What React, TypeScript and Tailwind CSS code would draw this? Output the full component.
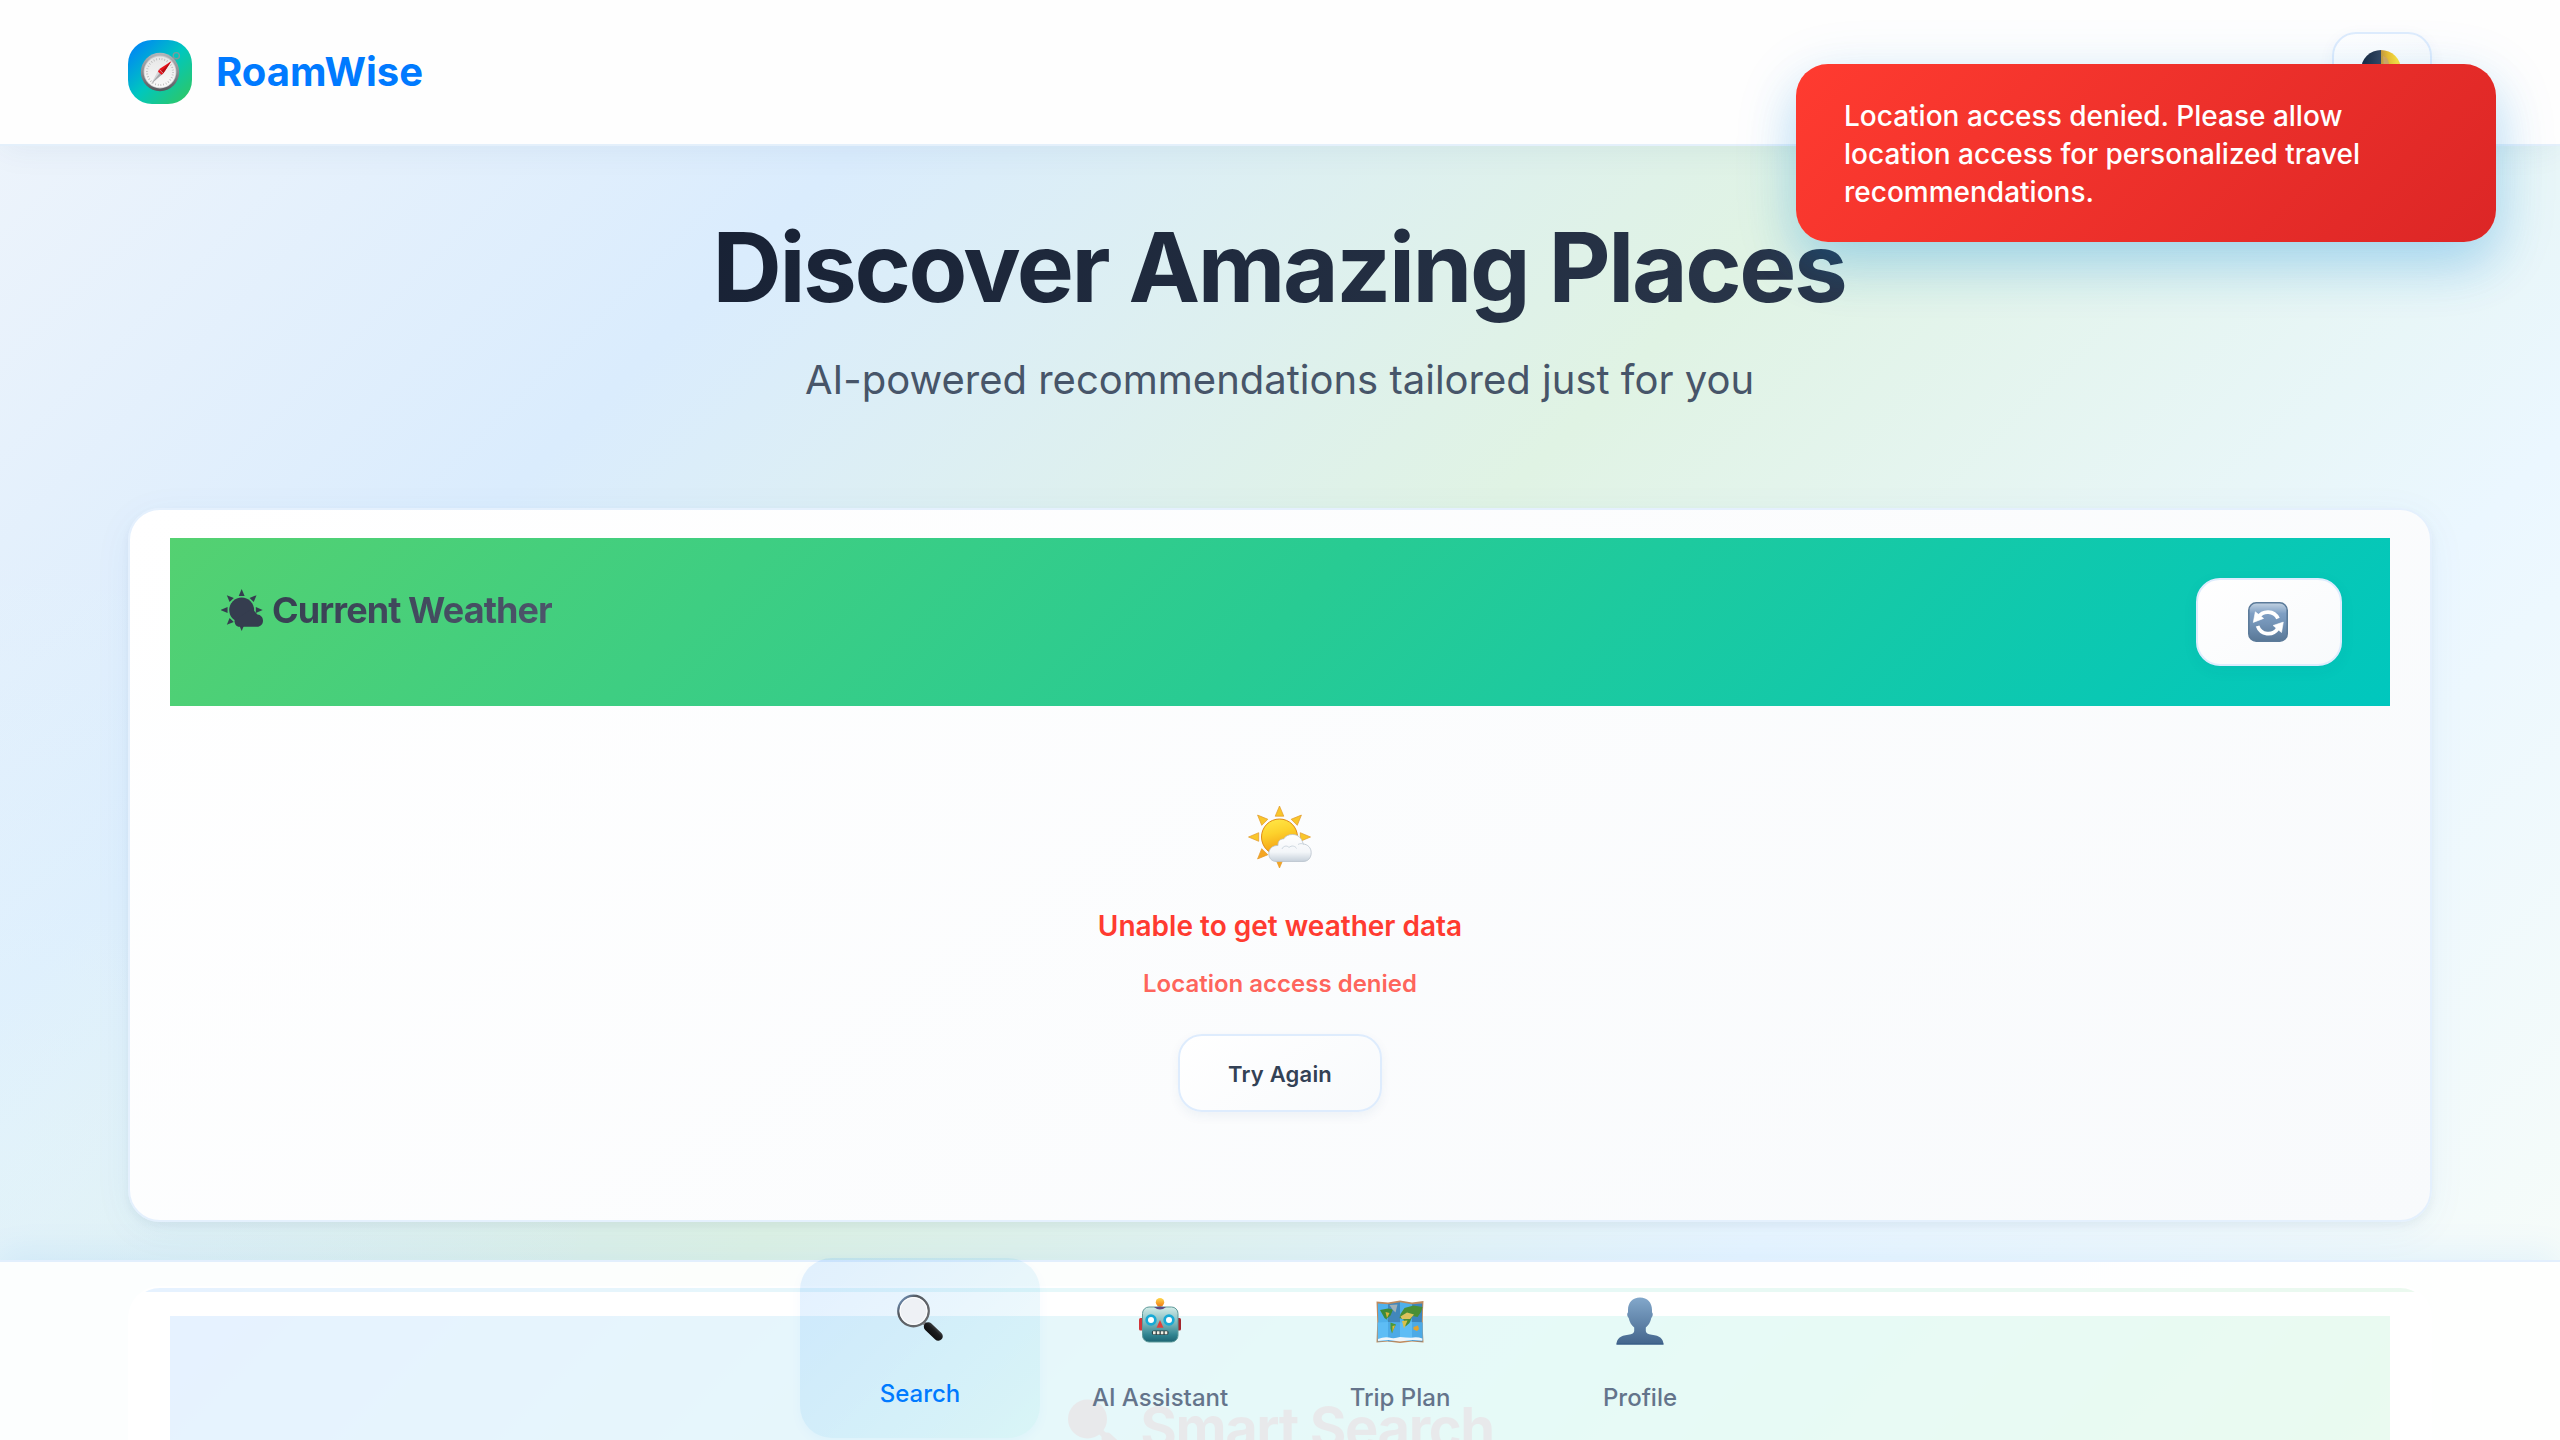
import React from 'react';

function CompassIcon() {
  return (
    <svg viewBox="0 0 48 48" className="h-12 w-12">
      <defs>
        <linearGradient id="cRim" x1="0" y1="0" x2="0" y2="1">
          <stop offset="0" stopColor="#b4b6ba" />
          <stop offset="0.5" stopColor="#8a8c91" />
          <stop offset="1" stopColor="#55575c" />
        </linearGradient>
        <linearGradient id="cFace" x1="0" y1="0" x2="0" y2="1">
          <stop offset="0" stopColor="#e6e6e6" />
          <stop offset="1" stopColor="#fafafa" />
        </linearGradient>
      </defs>
      <circle cx="39.3" cy="6.7" r="3.1" fill="none" stroke="#7e9a9c" strokeWidth="1.4" />
      <path d="M34.5 9.5l3 3" stroke="#8a8c91" strokeWidth="3" />
      <circle cx="23" cy="23" r="19.2" fill="url(#cRim)" />
      <circle cx="23" cy="23" r="16.4" fill="#c9cacc" />
      <circle cx="23" cy="23" r="15.6" fill="url(#cFace)" />
      <circle cx="23" cy="23" r="13" fill="none" stroke="#b5b5b5" strokeWidth="2" strokeDasharray="0.7 2.02" />
      <path d="M34.3 12.2L26.4 24.2 22 20.2z" fill="#e8121c" />
      <path d="M34.3 12.2L26.4 24.2 24.2 22.2z" fill="#b50d14" />
      <path d="M26.4 24.2L14 35 22 20.2z" fill="#d5d6d8" />
      <path d="M26.4 24.2L14 35 24.2 22.2z" fill="#a5a6aa" />
      <path d="M22 20.6l4.2 3.8-1.6 1.4-3.6-3z" fill="#e8121c" />
    </svg>
  );
}

function MoonIcon() {
  return (
    <svg viewBox="0 0 40 40" className="h-10 w-10">
      <defs>
        <linearGradient id="mLit" x1="0" y1="0" x2="1" y2="0">
          <stop offset="0" stopColor="#c99a3c" />
          <stop offset="0.35" stopColor="#f0bf2c" />
          <stop offset="0.8" stopColor="#ffe23a" />
        </linearGradient>
        <linearGradient id="mDark" x1="0" y1="0" x2="1" y2="0">
          <stop offset="0" stopColor="#16233a" />
          <stop offset="1" stopColor="#35465f" />
        </linearGradient>
      </defs>
      <path d="M20 0a20 20 0 000 40z" fill="url(#mDark)" />
      <path d="M20 0a20 20 0 010 40z" fill="url(#mLit)" />
      <path d="M22 6q5 1 6 8l-5 2z" fill="#d9a860" />
    </svg>
  );
}

const RAYS = [0, 45, 90, 180, 225, 270, 315];

function SunCloudIcon() {
  return (
    <svg viewBox="0 0 64 64" className="h-16 w-16">
      <defs>
        <linearGradient id="sBody" x1="0" y1="0" x2="0.25" y2="1">
          <stop offset="0" stopColor="#ffe94a" />
          <stop offset="0.45" stopColor="#fdd22c" />
          <stop offset="1" stopColor="#f39a12" />
        </linearGradient>
        <linearGradient id="sCloud" x1="0" y1="0" x2="0" y2="1">
          <stop offset="0" stopColor="#ffffff" />
          <stop offset="0.65" stopColor="#f3f6f9" />
          <stop offset="1" stopColor="#c6d0da" />
        </linearGradient>
      </defs>
      {RAYS.map((a) => (
        <path
          key={a}
          d="M31.5 1L27.2 11.2h8.6z"
          transform={`rotate(${a} 31.5 32)`}
          fill={a >= 180 && a < 270 ? '#f5a623' : '#f9c62b'}
          stroke="#e39a2a"
          strokeWidth="0.7"
        />
      ))}
      <circle cx="31.5" cy="32" r="18" fill="url(#sBody)" stroke="#e08b17" strokeWidth="1" />
      <path
        d="M30 40.5c-5.5-.2-9.2 3.4-9.2 8 0 4.8 3.2 8 7.2 8h27c5 0 8.2-3.6 8.2-8.8 0-5-3.6-8.4-8-8.7-1.5-6.5-5.5-9.5-10.7-9.500-4 0-7.200 1.600-8.800 4.400-4 0-6 2.500-5.700 6.600z"
        fill="url(#sCloud)"
        stroke="#b9c3cd"
        strokeWidth="0.8"
      />
      <path d="M34 44c1-3 5-4 7-1.500 2.500-2.500 6.500-1.500 7.500 1M50 39.500c2-1.200 4-1.200 6 0" fill="none" stroke="#cfd8e0" strokeWidth="1" />
    </svg>
  );
}

function SunCloudGlyph() {
  return (
    <svg viewBox="0 0 64 64" className="h-[42px] w-[42px]" fill="#353d4f">
      {RAYS.map((a) => (
        <path key={a} d="M31.5 0L27 10.5h9z" transform={`rotate(${a} 31.5 32)`} />
      ))}
      <circle cx="31.5" cy="32" r="19" />
      <path d="M28 57.5h27c5 0 9-4 9-9.200 0-5-3.600-9-8.500-9.400l-8-9-27 18c0 5 3 9.600 7.500 9.600z" />
    </svg>
  );
}

function RefreshIcon() {
  return (
    <svg viewBox="0 0 40 40" className="h-10 w-10">
      <defs>
        <linearGradient id="rBg" x1="0" y1="0" x2="0" y2="1">
          <stop offset="0" stopColor="#c3d3e2" />
          <stop offset="0.28" stopColor="#7f9fc4" />
          <stop offset="0.55" stopColor="#7393b6" />
          <stop offset="1" stopColor="#587796" />
        </linearGradient>
      </defs>
      <rect x="0.8" y="0.8" width="38.4" height="38.4" rx="7.5" fill="url(#rBg)" stroke="#5c7b9a" strokeWidth="1.6" />
      <path d="M10.2 15.5a11.300 11.300 0 0119.800 1" fill="none" stroke="#fff" strokeWidth="3.8" />
      <path d="M7.300 9.800l-2 10.600 10.300-4z" fill="#fff" stroke="#fff" strokeWidth="0.6" strokeLinejoin="round" />
      <path d="M29.800 26.500a11.300 11.300 0 01-20.200-2.500" fill="none" stroke="#fff" strokeWidth="3.8" />
      <path d="M33.500 30.500l1.800-10.400-10.200 3.400z" fill="#fff" stroke="#fff" strokeWidth="0.6" strokeLinejoin="round" />
    </svg>
  );
}

function SearchIcon() {
  return (
    <svg viewBox="0 0 48 48" className="h-12 w-12">
      <defs>
        <linearGradient id="hGrip" x1="1" y1="0" x2="0" y2="1">
          <stop offset="0" stopColor="#55575a" />
          <stop offset="0.4" stopColor="#1c1d1f" />
          <stop offset="1" stopColor="#0a0a0b" />
        </linearGradient>
        <linearGradient id="hRim" x1="0" y1="0" x2="1" y2="1">
          <stop offset="0" stopColor="#7aa7dd" />
          <stop offset="0.3" stopColor="#555a60" />
          <stop offset="1" stopColor="#6d6f72" />
        </linearGradient>
      </defs>
      <path d="M28 30l4 4" stroke="#7c7e81" strokeWidth="3.5" />
      <path d="M32.3 33.7L42.3 43.2" stroke="url(#hGrip)" strokeWidth="9" strokeLinecap="round" />
      <circle cx="17.5" cy="18" r="15.2" fill="#eef1f5" stroke="url(#hRim)" strokeWidth="2.4" />
      <circle cx="17.5" cy="18" r="13.5" fill="none" stroke="#ffffff" strokeWidth="1" />
    </svg>
  );
}

function RobotIcon() {
  return (
    <svg viewBox="0 0 48 48" className="h-12 w-12">
      <defs>
        <linearGradient id="bHead" x1="0" y1="0" x2="0" y2="1">
          <stop offset="0" stopColor="#d3ece8" />
          <stop offset="0.45" stopColor="#7db9bd" />
          <stop offset="0.8" stopColor="#2f8390" />
          <stop offset="1" stopColor="#1d6472" />
        </linearGradient>
        <linearGradient id="bBulb" x1="0" y1="0" x2="0" y2="1">
          <stop offset="0" stopColor="#ffd84a" />
          <stop offset="1" stopColor="#ef7d17" />
        </linearGradient>
      </defs>
      <rect x="3" y="21" width="5" height="12.5" rx="1.5" fill="#d2363a" />
      <rect x="40" y="21" width="5" height="12.5" rx="1.5" fill="#a3262d" />
      <path d="M18.5 12q5.5-6 11 0z" fill="#6d5590" />
      <circle cx="24" cy="5.2" r="4.2" fill="url(#bBulb)" />
      <rect x="6.5" y="10" width="35.5" height="35" rx="6.5" fill="url(#bHead)" stroke="#5f9a9a" strokeWidth="1" />
      <path d="M18 10q6 5 12 0z" fill="#5c4a86" />
      <circle cx="15" cy="23" r="5.7" fill="#17a9d6" />
      <circle cx="15" cy="23" r="3" fill="#fff" />
      <circle cx="33" cy="23" r="5.7" fill="#17a9d6" />
      <circle cx="33" cy="23" r="3" fill="#fff" />
      <path d="M24 23l3.5 7.8h-7z" fill="#e0403c" />
      <rect x="15.8" y="33.5" width="16.8" height="4.6" rx="2" fill="#2d4347" />
      <path d="M17 35.8h14.5" stroke="#f0efe4" strokeWidth="3" strokeDasharray="2.6 1.3" />
    </svg>
  );
}

function MapIcon() {
  return (
    <svg viewBox="0 0 48 48" className="h-12 w-12">
      <path d="M.5 4.500l11.500 1 12-2 12 2L47.500 4q-1.500 20 0 41.500l-11.500-1-12 1.500-12-1.500L.5 45.500q1.500-21 0-41z" fill="#c08a5c" />
      <path d="M1.800 6.500l10.200.8v36.400L1.800 44.500q1-19 0-38z" fill="#4fb1ec" />
      <path d="M12 7.300l12-2V44l-12 .2z" fill="#4187bb" />
      <path d="M24 5.300l12 2v36.400L24 44z" fill="#50b0ea" />
      <path d="M36 7.300L46.300 6.500q-1 19 0 38L36 43.700z" fill="#3c86bd" />
      <path d="M1.500 25.500l10.500-.5 12 .5 12-.5 10.500.5v18l-10.500-.2-12 .6-12-.6L1.800 43.500z" fill="#5dbdf5" />
      <path d="M12 25l12 .5v18.200l-12-.2zM36 25l10.500.5v18l-10.500-.2z" fill="#46a2e0" opacity="0.7" />
      <path d="M2 42q6-2.500 11-1.500 5 1.500 11-.5 6 .5 11 .8 6-1.500 11.300.8v2.200L36 43l-12 1.500L12 43l-10 1z" fill="#eef5fa" />
      <path d="M4 13l8-1.500 5 1-2.500 6-4 3.500 3 2.500-5-3.500z" fill="#3d8b37" />
      <path d="M9.500 15l4 1-2.500 5z" fill="#d9b33a" />
      <path d="M13.500 8l8-.5-2 8-3-3z" fill="#9fb0b8" />
      <path d="M14.500 25.500l5.500 2-2.500 5-1.500 4-1.500-5z" fill="#4a9a3a" />
      <path d="M16.500 29l2.500-.5-2.500 6.500z" fill="#e3b53a" />
      <path d="M24.500 17l4-6 9-2.500 9 1.500-1.500 5-3.500 5-5-1-3 7-4 3.500-2-7-4-1.500z" fill="#4a8f35" />
      <path d="M24.500 19.500l6.500-4 7 2-4 4.500h-8z" fill="#dcc25c" />
      <path d="M26 24l5.500-.5-3.500 8z" fill="#d9c04a" />
      <path d="M37.500 30l4.500-1.500 1 3.500-2 2-3.500-1.500z" fill="#e2a32e" />
    </svg>
  );
}

function ProfileIcon() {
  return (
    <svg viewBox="0 0 48 48" className="h-12 w-12">
      <defs>
        <linearGradient id="pBody" x1="0" y1="0" x2="0" y2="1">
          <stop offset="0" stopColor="#83a8cb" />
          <stop offset="1" stopColor="#43658c" />
        </linearGradient>
      </defs>
      <path
        d="M24 .5c7.500 0 12 5 12 12.500v2.600c1.200.6 1 4-.7 5.400-.8 4.500-3 7.500-5.500 9.500v3.500c0 2 2 3.200 6 3.800 8 .8 11.700 4.200 11.700 9.700H.5c0-5.500 3.700-8.900 11.700-9.700 4-.6 6-1.800 6-3.800v-3.500c-2.500-2-4.700-5-5.500-9.500-1.700-1.400-1.900-4.800-.7-5.400V13C12 5.500 16.500.5 24 .5z"
        fill="url(#pBody)"
      />
      <path d="M.5 47h47" stroke="#345a86" strokeWidth="1.2" />
    </svg>
  );
}

const TABS = [
  { label: 'Search', icon: <SearchIcon />, active: true },
  { label: 'AI Assistant', icon: <RobotIcon />, active: false },
  { label: 'Trip Plan', icon: <MapIcon />, active: false },
  { label: 'Profile', icon: <ProfileIcon />, active: false },
];

export default function App() {
  return (
    <div className="relative flex h-screen w-full flex-col overflow-hidden bg-[radial-gradient(circle_at_0%_80%,rgba(236,250,252,0.4)_0%,rgba(236,250,252,0)_22%),linear-gradient(135deg,#f0f5fb_0%,#daecfd_25%,#e0f3e4_50%,#ebf7ff_75%,#f8fdf8_100%)] font-['Inter',sans-serif]">
      <header className="relative flex h-[146px] shrink-0 items-center justify-between border-b-2 border-[#e4f0fb] bg-[#fefefe] px-32 shadow-[0_4px_32px_rgba(0,60,120,0.06)]">
        <div className="flex items-center gap-6">
          <div className="flex h-16 w-16 items-center justify-center rounded-3xl bg-[linear-gradient(135deg,#007aff_0%,#00c7be_50%,#34c759_100%)] pt-0.5 pl-0.5">
            <CompassIcon />
          </div>
          <span className="text-[40px] leading-[64px] font-bold text-[#007aff]">RoamWise</span>
        </div>
        <button className="flex h-20 w-[100px] items-center justify-center rounded-3xl border-2 border-[#deecfd] bg-[linear-gradient(145deg,#ffffff,#f8fafc)] pr-0.5 pb-1 shadow-[0_4px_16px_rgba(0,80,160,0.05)]">
          <MoonIcon />
        </button>
      </header>

      <main className="flex shrink-0 flex-col px-32 pt-[60px]">
        <h1 className="bg-[linear-gradient(135deg,#0f172a_0%,#334155_100%)] bg-clip-text pr-0.5 text-center text-[96px] leading-[122px] font-bold tracking-[-0.025em] text-transparent">
          Discover Amazing Places
        </h1>
        <p className="mt-[19px] pr-px text-center text-[40px] leading-[66px] text-[#475569]">
          AI-powered recommendations tailored just for you
        </p>

        <section className="mt-[95px] h-[714px] rounded-[32px] border-2 border-[#e4f0fd] bg-[linear-gradient(145deg,#ffffff_0%,#f8fafc_100%)] px-10 pt-7 shadow-[0_4px_8px_rgba(0,40,80,0.05),0_8px_40px_rgba(0,100,200,0.05)]">
          <div className="flex items-start justify-between bg-[linear-gradient(135deg,#54d171_0%,#28cb93_50%,#00c7be_100%)] px-12 py-10">
            <h2 className="flex items-center leading-[64px]">
              <span className="mr-[9px] ml-[3px]">
                <SunCloudGlyph />
              </span>
              <span className="bg-[linear-gradient(135deg,#353d4f,#4f576d)] bg-clip-text text-[36px] font-bold tracking-[-0.025em] text-transparent">
                Current Weather
              </span>
            </h2>
            <button className="flex h-[88px] w-[146px] items-center justify-center rounded-3xl border-2 border-[#deecfd] bg-[linear-gradient(145deg,#ffffff,#f8fafc)] pr-0.5 shadow-[0_4px_16px_rgba(0,60,120,0.05)]">
              <RefreshIcon />
            </button>
          </div>
          <div className="flex flex-col items-center pt-[99px]">
            <SunCloudIcon />
            <p className="mt-[37px] text-[28px] leading-[40px] font-semibold text-[#ff3b30]">Unable to get weather data</p>
            <p className="mt-5 text-[24px] leading-[36px] font-semibold text-[#ff3b30]/80">Location access denied</p>
            <button className="mt-8 h-[78px] w-[204px] rounded-3xl border-2 border-[#deecfd] bg-[linear-gradient(145deg,#ffffff,#f8fafc)] pt-0.5 text-[22px] font-semibold tracking-[0.01em] text-[#334155] shadow-[0_4px_12px_rgba(0,60,120,0.06)]">
              Try Again
            </button>
          </div>
        </section>

        <section className="mt-16 h-[400px] overflow-hidden rounded-[32px] border-2 border-white/40 bg-white">
          <div className="h-1 bg-[linear-gradient(90deg,#007aff_0%,#00c7be_50%,#34c759_100%)]" />
          <div className="mx-10 mt-6 h-[300px] bg-[linear-gradient(135deg,#007aff_0%,#00c7be_50%,#30d158_100%)] pt-[76px]">
            <h2 className="flex items-start justify-center gap-3 pl-0.5 text-[56px] leading-[72px] font-bold tracking-[-0.025em] text-[#1b2436]">
              <svg viewBox="0 0 60 60" className="mt-1.5 h-[60px] w-[60px]" fill="#1b2436">
                <circle cx="19.5" cy="21" r="19.5" />
                <path d="M30 31L36 37" stroke="#1b2436" strokeWidth="6" />
                <path d="M39 40L53 53" stroke="#1b2436" strokeWidth="11" strokeLinecap="round" />
              </svg>
              <span>Smart Search</span>
            </h2>
          </div>
        </section>
      </main>

      <nav className="absolute inset-x-0 bottom-0 flex h-[180px] justify-center border-t-2 border-[#e2effd] bg-white/90 shadow-[0_-8px_32px_rgba(0,122,255,0.08)]">
        {TABS.map((tab) => (
          <a
            key={tab.label}
            className={
              tab.active
                ? 'flex h-[180px] w-60 -translate-y-1 flex-col items-center rounded-[32px] bg-[linear-gradient(135deg,rgba(0,122,255,0.11)_0%,rgba(0,199,190,0.06)_100%)] pt-[35px] text-[#007aff] shadow-[0_4px_12px_rgba(0,122,255,0.04)]'
                : 'flex h-[180px] w-60 flex-col items-center pt-[35px] text-[#64748b]'
            }
          >
            {tab.icon}
            <span className="mt-[34px] text-[24px] leading-[38px] font-medium">{tab.label}</span>
          </a>
        ))}
      </nav>

      <div className="absolute top-16 right-16 h-[178px] w-[700px] rounded-[32px] bg-[linear-gradient(135deg,#ff3b30_0%,#dc2626_100%)] px-12 pt-[33px] text-[28px] leading-[38px] font-medium text-white shadow-[0_16px_64px_rgba(0,130,220,0.16),0_24px_48px_rgba(0,140,220,0.18)]">
        <p className="w-[560px]">
          Location access denied. Please allow location access for personalized travel recommendations.
        </p>
      </div>
    </div>
  );
}
